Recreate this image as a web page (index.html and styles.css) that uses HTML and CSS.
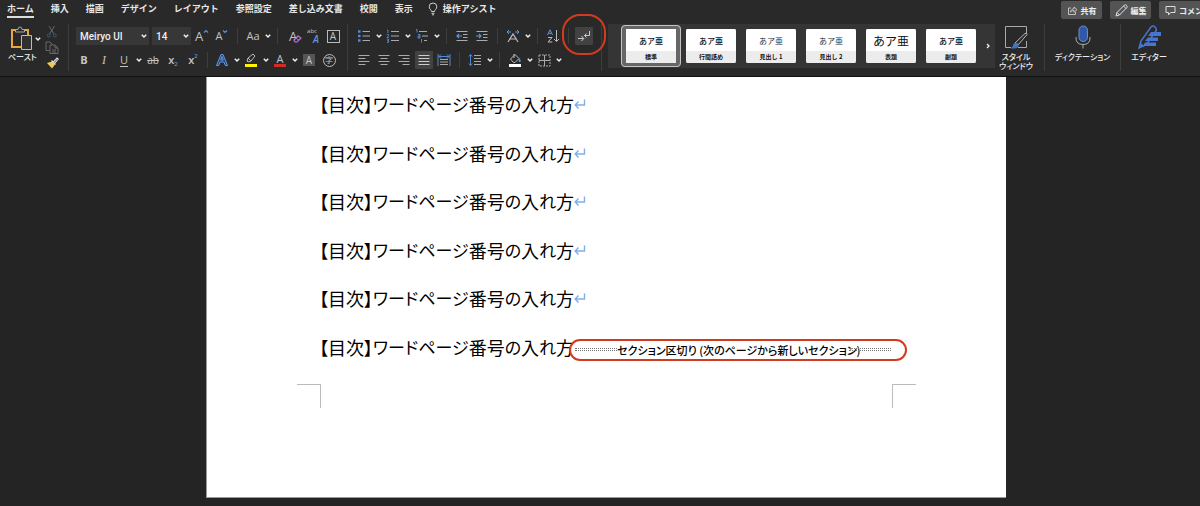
FILE: index.html
```html
<!DOCTYPE html>
<html lang="ja">
<head>
<meta charset="utf-8">
<title>文書</title>
<link rel="stylesheet" href="styles.css">
</head>
<body>
<svg class="defs" aria-hidden="true">
  <symbol id="caret" viewBox="0 0 8 8"><path d="M1.800 2.800L4 5l2.200-2.200" fill="none" stroke="#f0f0f0" stroke-width="1.500"/></symbol>
  <symbol id="return" viewBox="0 0 12 12"><path d="M10.500 1.500v5.500H1.500M4.500 3.500L1.200 7l3.300 3.500" fill="none" stroke="#80aee8" stroke-width="1.400"/></symbol>
</svg>
<header class="tabs">
  <nav class="tab-list">
    <a href="#" class="tab active">ホーム</a>
    <a href="#" class="tab">挿入</a>
    <a href="#" class="tab">描画</a>
    <a href="#" class="tab">デザイン</a>
    <a href="#" class="tab">レイアウト</a>
    <a href="#" class="tab">参照設定</a>
    <a href="#" class="tab">差し込み文書</a>
    <a href="#" class="tab">校閲</a>
    <a href="#" class="tab">表示</a>
    <a href="#" class="tab assist"><svg width="10" height="14" viewBox="0 0 10 14"><path d="M3.500 9.500C3.500 8 1.200 7 1.200 4.800a3.800 3.800 0 0 1 7.600 0C8.800 7 6.500 8 6.500 9.500zM3.500 11.300h3M4 12.800h2" fill="none" stroke="#d0d0d0"/></svg>操作アシスト</a>
  </nav>
  <div class="actions">
    <button class="pill"><svg width="11" height="11" viewBox="0 0 11 11"><path d="M4 3H1.500v6.500h7V7M3.500 7C4 4.500 5.500 3.800 7 3.800V2l3 2.700-3 2.600V5.500C5.500 5.500 4.500 6 3.500 7z" fill="none" stroke="#ddd" stroke-width=".8"/></svg>共有</button>
    <button class="pill"><svg width="13" height="13" viewBox="0 0 13 13"><path d="M1 12l1-3.500L9.500 1q1-.6 2 .4t.5 2L4.500 11zM2 8.500L4.500 11M8.500 2L11 4.500" fill="none" stroke="#e4e4e4"/></svg>編集</button>
    <button class="pill clipped"><svg width="11" height="11" viewBox="0 0 11 11"><path d="M1 1.500h9v6H5.500L3.500 10V7.500H1z" fill="none" stroke="#ddd"/></svg>コメント</button>
  </div>
</header>

<div class="ribbon" role="toolbar" aria-label="ホーム">
  <div class="clipboard">
    <div class="paste">
      <div class="paste-row">
        <button class="paste-button" aria-label="ペースト"><svg width="22" height="25" viewBox="0 0 22 25"><path d="M6 4H2v17h10M14 4h4v6" fill="none" stroke="#e7a73a" stroke-width="2"/><path d="M5.500 6V3.500H8Q8 1 10 1t2 2.500h2.500V6z" fill="#292929" stroke="#aaa"/><path d="M11.500 9.500h10v14h-10z" fill="#303030" stroke="#bcbcbc"/></svg></button>
        <button class="caret" aria-label="貼り付けのオプション"><svg><use href="#caret"/></svg></button>
      </div>
      <span class="caption">ペースト</span>
    </div>
    <div class="clip-tools">
      <button class="mini" aria-label="切り取り"><svg width="12" height="13" viewBox="0 0 12 13"><path d="M3 1l5 8M8.500 1l-5 8" fill="none" stroke="#777" stroke-width=".8"/><g fill="none" stroke="#3d5878"><circle cx="2.800" cy="10.500" r="1.500"/><circle cx="8.800" cy="10.500" r="1.500"/></g></svg></button>
      <button class="mini" aria-label="コピー"><svg width="14" height="13" viewBox="0 0 14 13"><path d="M4.500 9.500H1V1h4l2 2v1M5 4h5l3 3v5.500H5zM10 4v3h3M7 9h4M7 11h4" fill="none" stroke="#686868"/></svg></button>
      <button class="mini" aria-label="書式のコピー"><svg width="13" height="12" viewBox="0 0 13 12"><path d="M1 6l5-1.500 3 3L6 11.500z" fill="#efca59"/><path d="M5.500 3.500l4 4M7.500 5L11 1l1.200 1L9 6" fill="none" stroke="#ddd" stroke-width="1.200"/></svg></button>
    </div>
  </div>

  <div class="group font-group">
    <div class="row selects">
      <label class="select font-name"><select aria-label="フォント"><option>Meiryo UI</option></select><svg><use href="#caret"/></svg></label>
      <label class="select font-size"><select aria-label="フォント サイズ"><option>14</option></select><svg><use href="#caret"/></svg></label>
      <button class="tool" aria-label="拡大"><span class="glyph big">A</span><svg class="mark" viewBox="0 0 6 5"><path d="M1 3.500l2-2 2 2" fill="none" stroke="#5b91d3" stroke-width="1.200"/></svg></button>
      <button class="tool" aria-label="縮小"><span class="glyph">A</span><svg class="mark" viewBox="0 0 6 5"><path d="M1 1.500l2 2 2-2" fill="none" stroke="#5b91d3" stroke-width="1.200"/></svg></button>
      <span class="sep"></span>
      <button class="tool" aria-label="文字種の変換"><span class="glyph">Aa</span></button>
      <button class="caret" aria-label="文字種の一覧"><svg><use href="#caret"/></svg></button>
      <span class="sep"></span>
      <button class="tool" aria-label="書式のクリア"><span class="glyph big">A</span><svg class="eraser" width="9" height="8" viewBox="0 0 9 8"><path d="M1 5l4-4 3 2-4 4H2z" fill="#292929" stroke="#b878d0" stroke-width="1.200"/><path d="M3 3l3 2.500" stroke="#b878d0"/></svg></button>
      <button class="tool ruby" aria-label="ルビ"><span class="abc">abc</span><span class="blue-a">A</span></button>
      <button class="tool" aria-label="囲み線"><span class="boxed">A</span></button>
    </div>
    <div class="row">
      <button class="tool bold">B</button>
      <button class="tool italic">I</button>
      <button class="tool underline">U</button>
      <button class="caret" aria-label="下線の種類"><svg><use href="#caret"/></svg></button>
      <button class="tool strike">ab</button>
      <button class="tool script">x<sub>2</sub></button>
      <button class="tool script">x<sup>2</sup></button>
      <span class="sep thin"></span>
      <button class="tool" aria-label="文字の効果"><svg width="14" height="14" viewBox="0 0 14 14"><path d="M1.500 12.500L6 1.500h2l4.500 11h-2.200L9 9H5l-1.300 3.500zM5.700 7h2.600L7 3.500z" fill="#203d70" stroke="#659ce8"/></svg></button>
      <button class="caret" aria-label="文字の効果の一覧"><svg><use href="#caret"/></svg></button>
      <button class="tool" aria-label="蛍光ペン"><svg width="14" height="14" viewBox="0 0 14 14"><path d="M3 8l1-3 5-4 2 2-4 5-3 1zM4 5l3 3" fill="none" stroke="#bbb"/><path d="M1 11h12v3H1z" fill="#fff100"/></svg></button>
      <button class="caret" aria-label="蛍光ペンの色"><svg><use href="#caret"/></svg></button>
      <button class="tool font-color" aria-label="フォントの色"><span>A</span></button>
      <button class="caret" aria-label="色の一覧"><svg><use href="#caret"/></svg></button>
      <button class="tool" aria-label="文字の網かけ"><span class="shaded">A</span></button>
      <button class="tool" aria-label="囲い文字"><span class="circled">字</span></button>
    </div>
  </div>

  <div class="group">
    <div class="row">
      <button class="tool" aria-label="箇条書き"><svg width="14" height="14" viewBox="0 0 14 14"><path d="M1 2.500h2.500M1 7h2.500M1 11.500h2.500" stroke="#5389cf" stroke-width="2.500"/><path d="M5.500 2.500H13M5.500 7H13M5.500 11.500H13" stroke="#aaa"/></svg></button>
      <button class="caret" aria-label="行頭文字"><svg><use href="#caret"/></svg></button>
      <button class="tool" aria-label="段落番号"><svg width="14" height="14" viewBox="0 0 14 14"><path d="M1 1.200h1V4M.8 5.500h1.700v1.200L1 8.500h1.700M.8 10h1.700v3.500H.8M1 11.700h1.500" fill="none" stroke="#5389cf" stroke-width=".9"/><path d="M5 2.500h8M5 7h8M5 11.500h8" stroke="#aaa"/></svg></button>
      <button class="caret" aria-label="番号の種類"><svg><use href="#caret"/></svg></button>
      <button class="tool" aria-label="アウトライン"><svg width="14" height="14" viewBox="0 0 14 14"><path d="M1 .500h1v3M3 5.500h2V9H3V7.200h2M6.500 10v3.500" fill="none" stroke="#5389cf"/><path d="M4 2.500h8M7 7h6M9 11.500h3" stroke="#aaa"/></svg></button>
      <button class="caret" aria-label="アウトラインの種類"><svg><use href="#caret"/></svg></button>
      <span class="sep"></span>
      <button class="tool" aria-label="インデントを減らす"><svg width="12" height="12" viewBox="0 0 12 12"><path d="M.5 1.500h11M7 4.500h4.500M7 7.500h4.500M.5 10.500h11" stroke="#aaa"/><path d="M6 6H1M3 4L1 6l2 2" fill="none" stroke="#5b94df" stroke-width="1.200"/></svg></button>
      <button class="tool" aria-label="インデントを増やす"><svg width="12" height="12" viewBox="0 0 12 12"><path d="M.5 1.500h11M7 4.500h4.500M7 7.500h4.500M.5 10.500h11" stroke="#aaa"/><path d="M0 6h5M3 4l2 2-2 2" fill="none" stroke="#5b94df" stroke-width="1.200"/></svg></button>
      <span class="sep"></span>
      <button class="tool" aria-label="拡張書式"><svg width="14" height="14" viewBox="0 0 14 14"><path d="M2 13l5-8 5 8M4 10h6" fill="none" stroke="#bbb" stroke-width="1.200"/><path d="M1 3h4M3 1L1 3l2 2M9 3h4M11 1l2 2-2 2" fill="none" stroke="#5b94df"/></svg></button>
      <button class="caret" aria-label="拡張書式の一覧"><svg><use href="#caret"/></svg></button>
      <span class="sep"></span>
      <button class="tool" aria-label="並べ替え"><svg width="14" height="14" viewBox="0 0 14 14"><path d="M1.500 6L4 .800 6.500 6M2.500 4.300h3" fill="none" stroke="#5b94df"/><path d="M2 8.500h4L2 13h4.300M10.500 1v11.500M8 10l2.500 2.500L13 10" fill="none" stroke="#bbb"/></svg></button>
      <span class="sep"></span>
      <span class="marks-holder">
        <button class="tool pressed" aria-label="編集記号の表示"><svg width="14" height="14" viewBox="0 0 14 14"><path d="M1 9.500h5.500M4.500 7l2.300 2.500L4.500 12M12.500 2v4.500H7.500M9.500 4.500l-2 2 2 2" fill="none" stroke="#ccc"/></svg></button>
        <span class="ring"></span>
      </span>
    </div>
    <div class="row">
      <button class="tool" aria-label="左揃え"><svg width="12" height="12" viewBox="0 0 12 12"><path d="M.5 1.500h11M.5 4.500h7M.5 7.500h11M.5 10.500h7" stroke="#aaa"/></svg></button>
      <button class="tool" aria-label="中央揃え"><svg width="12" height="12" viewBox="0 0 12 12"><path d="M.5 1.500h11M2.500 4.500h7M.5 7.500h11M2.500 10.500h7" stroke="#aaa"/></svg></button>
      <button class="tool" aria-label="右揃え"><svg width="12" height="12" viewBox="0 0 12 12"><path d="M.5 1.500h11M4.500 4.500h7M.5 7.500h11M4.500 10.500h7" stroke="#aaa"/></svg></button>
      <button class="tool pressed" aria-label="両端揃え"><svg width="12" height="12" viewBox="0 0 12 12"><path d="M.5 1.500h11M.5 4.500h11M.5 7.500h11M.5 10.500h11" stroke="#ccc"/></svg></button>
      <button class="tool" aria-label="均等割り付け"><svg width="14" height="14" viewBox="0 0 14 14"><path d="M1 1v12M13 1v12M2 3.500h10M4 1.500l-2 2 2 2M10 1.500l2 2-2 2" fill="none" stroke="#5389cf"/><path d="M3 6.500h8M3 9h8M3 11.500h8" stroke="#aaa"/></svg></button>
      <span class="sep"></span>
      <button class="tool" aria-label="行間"><svg width="14" height="14" viewBox="0 0 14 14"><path d="M2.500 1.500v11M.8 3.500l1.700-2 1.700 2M.8 10.500l1.700 2 1.700-2" fill="none" stroke="#5389cf"/><path d="M6 2.500h7M6 5.500h7M6 8.500h7M6 11.500h7" stroke="#aaa"/></svg></button>
      <button class="caret" aria-label="行間の一覧"><svg><use href="#caret"/></svg></button>
      <span class="sep"></span>
      <button class="tool" aria-label="塗りつぶし"><svg width="14" height="14" viewBox="0 0 14 14"><path d="M2.500 6L7 1.500l4 4L7 9.500H5.500zM6 1v4" fill="none" stroke="#bbb"/><path d="M11 5q3 3 1 4t-1-4" fill="#5b94df"/><path d="M1 11h12v3H1z" fill="#fff"/></svg></button>
      <button class="caret" aria-label="塗りつぶしの色"><svg><use href="#caret"/></svg></button>
      <button class="tool" aria-label="罫線"><svg width="13" height="13" viewBox="0 0 13 13"><path d="M1 1h11v11H1z" fill="none" stroke="#aaa" stroke-dasharray="2 1"/><path d="M6.500 1v11M1 6.500h11" stroke="#aaa"/></svg></button>
      <button class="caret" aria-label="罫線の一覧"><svg><use href="#caret"/></svg></button>
    </div>
  </div>

  <div class="gallery">
    <button class="style selected"><span class="sample">あア亜</span><span class="name">標準</span></button>
    <button class="style"><span class="sample">あア亜</span><span class="name">行間詰め</span></button>
    <button class="style"><span class="sample light">あア亜</span><span class="name">見出し 1</span></button>
    <button class="style"><span class="sample light">あア亜</span><span class="name">見出し 2</span></button>
    <button class="style"><span class="sample large">あア亜</span><span class="name">表題</span></button>
    <button class="style"><span class="sample">あア亜</span><span class="name">副題</span></button>
    <button class="more" aria-label="次のスタイル"><svg width="6" height="8" viewBox="0 0 6 8"><path d="M2 2l2 2-2 2" fill="none" stroke="#eee" stroke-width="1.300"/></svg></button>
  </div>

  <div class="panes">
    <button class="pane styles-pane"><svg width="25" height="25" viewBox="0 0 25 25"><path d="M7 22.500H1.500v-21h21V9M22.500 16v6.500H14" fill="none" stroke="#aaa"/><path d="M11 18L21 8.500q2-1 2 1L14 20z" fill="#292929" stroke="#bbb"/><path d="M6 23q3-.5 3-3 1-3 4-2t1 4q-2 2.500-8 1z" fill="#4571c4"/></svg><span>スタイル<br>ウィンドウ</span></button>
    <button class="pane dictation"><svg width="16" height="25" viewBox="0 0 16 25"><rect x="4" y="1" width="8.500" height="15.500" rx="4.200" fill="#3157a8" stroke="#6790d4"/><path d="M1 12v1q0 6.500 7 6.500t7-6.500v-1M8 19.500v4" fill="none" stroke="#aaa"/></svg><span>ディクテーション</span></button>
    <button class="pane editor"><svg width="25" height="25" viewBox="0 0 25 25"><path d="M2 23l2-7L14 2q2-2 4 0t1 4L9 20z" fill="none" stroke="#4a74cc" stroke-width="1.500"/><path d="M14 7h10v4H11zM11 12.500h10v3.500H8zM8 17.500h11V21H6z" fill="#4775d1"/><path d="M2 23l2-5 3 3z" fill="#4a74cc"/></svg><span>エディター</span></button>
  </div>
</div>

<main class="canvas">
  <article class="page">
    <ul class="lines">
      <li>【目次】<span class="kana">ワードページ</span>番号<span class="kana">の</span>入<span class="kana">れ</span>方<svg class="ret"><use href="#return"/></svg></li>
      <li>【目次】<span class="kana">ワードページ</span>番号<span class="kana">の</span>入<span class="kana">れ</span>方<svg class="ret"><use href="#return"/></svg></li>
      <li>【目次】<span class="kana">ワードページ</span>番号<span class="kana">の</span>入<span class="kana">れ</span>方<svg class="ret"><use href="#return"/></svg></li>
      <li>【目次】<span class="kana">ワードページ</span>番号<span class="kana">の</span>入<span class="kana">れ</span>方<svg class="ret"><use href="#return"/></svg></li>
      <li>【目次】<span class="kana">ワードページ</span>番号<span class="kana">の</span>入<span class="kana">れ</span>方<svg class="ret"><use href="#return"/></svg></li>
      <li>【目次】<span class="kana">ワードページ</span>番号<span class="kana">の</span>入<span class="kana">れ</span>方<span class="break"><i class="dots"></i><span>セクション区切り (次のページから新しいセクション)</span><i class="dots tail"></i></span></li>
    </ul>
    <div class="corners"><i class="corner left"></i><i class="corner right"></i></div>
  </article>
</main>
</body>
</html>
```
FILE: styles.css
```css
* { box-sizing: border-box; }
body {
  margin: 0;
  min-height: 100vh;
  background: #242424;
  color: #eee;
  font-family: "Noto Sans CJK JP", sans-serif;
  overflow-x: hidden;
}
.defs { position: absolute; width: 0; height: 0; }
button {
  border: 0;
  padding: 0;
  margin: 0;
  background: none;
  color: inherit;
  font: inherit;
}
svg { display: block; flex: none; }

/* tab strip */
.tabs {
  display: flex;
  justify-content: space-between;
  height: 19px;
  background: #292929;
}
.tab-list { display: flex; gap: 17px; padding-left: 7px; }
.tab {
  color: #e8e8e8;
  font-size: 9px;
  font-weight: 700;
  line-height: 17px;
  text-decoration: none;
  white-space: nowrap;
}
.active { height: 18px; border-bottom: 2px solid #ddd; }
.assist { display: flex; align-items: center; gap: 5px; margin-left: -2px; height: 17px; }
.actions { display: flex; gap: 8px; }
.pill {
  display: flex;
  align-items: center;
  justify-content: center;
  gap: 3px;
  width: 41px;
  height: 18px;
  margin-top: 1px;
  border-radius: 2px;
  background: #545454;
  font-size: 8px;
  font-weight: 700;
  white-space: nowrap;
}
.clipped { justify-content: flex-start; padding-left: 6px; overflow: hidden; border-radius: 2px 0 0 2px; }

/* ribbon */
.ribbon {
  display: flex;
  height: 58px;
  background: #292929;
  border-bottom: 1px solid #111;
}
.clipboard {
  display: flex;
  width: 69px;
  flex: none;
  margin: 5px 0;
  padding-left: 8px;
  border-right: 1px solid #3d3d3d;
}
.paste { width: 34px; }
.paste-row { display: flex; align-items: center; gap: 2px; padding: 2px 0 0 2px; }
.caption { display: block; font-size: 8px; font-weight: 500; line-height: 12px; white-space: nowrap; font-feature-settings: "palt"; }
.clip-tools { display: flex; flex-direction: column; gap: 2px; padding-left: 2px; }
.mini { display: grid; place-items: center; width: 16px; height: 14px; }

.group {
  display: flex;
  flex-direction: column;
  flex: none;
  gap: 6px;
  margin: 5px 0;
  padding: 3px 7px 0 6px;
  border-right: 1px solid #3d3d3d;
}
.font-group { padding-right: 4px; padding-left: 5px; }
.row { display: flex; align-items: center; height: 18px; }
.selects { padding-left: 2px; }
.tool {
  position: relative;
  display: flex;
  align-items: center;
  justify-content: center;
  width: 20px;
  height: 18px;
  color: #c4c4c4;
  font-family: "Open Sans", "Noto Sans CJK JP", sans-serif;
  font-size: 11px;
  line-height: 18px;
}
.caret { display: grid; place-items: center; width: 9px; height: 18px; }
.caret svg, .select svg { width: 8px; height: 8px; }
.sep { width: 1px; height: 16px; margin: 0 5px; background: #3d3d3d; }
.thin { margin: 0 4px; }
.select { position: relative; display: flex; height: 18px; }
.select svg { position: absolute; right: 1px; top: 5px; pointer-events: none; }
.select select {
  appearance: none;
  width: 100%;
  height: 18px;
  margin: 0;
  border: 0;
  padding: 0 4px;
  background: #373737;
  color: #eee;
  font-family: Roboto, sans-serif;
  font-size: 10px;
  font-weight: 500;
}
.font-name { width: 73px; margin-right: 3px; }
.font-size { width: 39px; margin-right: 1px; }
.big { font-size: 13px; }
.mark { width: 6px; height: 5px; align-self: flex-start; margin-top: 2px; }
.eraser { position: absolute; right: 1px; bottom: 2px; }
.abc { align-self: flex-start; font-size: 6px; line-height: 9px; }
.blue-a { color: #5b94df; font-size: 10px; font-style: italic; font-weight: 600; line-height: 12px; align-self: flex-end; margin-left: -4px; }
.boxed { width: 13px; height: 13px; border: 1px solid #bbb; font-size: 10px; line-height: 11px; }
.bold { font-weight: 700; }
.italic { font-family: "Liberation Serif", serif; font-style: italic; font-size: 12px; }
.underline { text-decoration: underline; text-underline-offset: 2px; }
.strike { font-size: 10px; text-decoration: line-through; }
.script { font-weight: 600; }
.script sub, .script sup { color: #5b94df; font-size: 6px; line-height: 6px; }
.script sub { align-self: flex-end; margin-bottom: 2px; }
.script sup { align-self: flex-start; margin-top: 2px; }
.font-color span { width: 12px; height: 14px; border-bottom: 3px solid #d22c22; line-height: 11px; }
.shaded { width: 12px; height: 12px; background: #555; font-size: 10px; line-height: 12px; }
.circled { width: 13px; height: 13px; border: 1px solid #bbb; border-radius: 50%; font-size: 8px; line-height: 10px; }
.pressed { width: 18px; margin: 0 1px; border-radius: 1px; background: #424242; }
.marks-holder { position: relative; }
.ring {
  position: absolute;
  left: -12px;
  top: -13px;
  width: 44px;
  height: 41px;
  border: 2px solid #d33b21;
  border-radius: 18px;
  pointer-events: none;
}

/* style gallery */
.gallery {
  display: flex;
  align-items: center;
  flex: 1;
  min-width: 0;
  height: 44px;
  margin: 5px 0 0 6px;
  padding-left: 13px;
  background: #353535;
  overflow: hidden;
}
.style {
  display: flex;
  flex-direction: column;
  flex: none;
  width: 60px;
  height: 42px;
  border: 4px solid transparent;
  border-radius: 6px;
  border-width: 4px 5px;
  background: linear-gradient(#fff 66%, #ececec 66%) padding-box;
  color: #111;
  text-align: center;
}
.selected { outline: 1px solid #c4c4c4; outline-offset: -1px; border-color: #666; border-radius: 4px; }
.sample { height: 22px; font-size: 8px; font-weight: 500; line-height: 23px; }
.light { color: #333; font-weight: 400; }
.large { font-size: 12px; font-weight: 400; }
.name { font-size: 6px; font-weight: 700; line-height: 11px; }
.more { margin: 0 4px 0 auto; }

.panes { display: flex; flex: none; width: 205px; padding: 5px 0; }
.pane {
  display: flex;
  flex-direction: column;
  align-items: center;
  gap: 2px;
  padding-top: 1px;
  border-right: 1px solid #3d3d3d;
  font-size: 8px;
  font-weight: 500;
  line-height: 9px;
  white-space: nowrap;
  font-feature-settings: "palt";
}
.styles-pane { width: 50px; padding-right: 7px; }
.dictation { width: 76px; }
.editor { width: 56px; border: 0; }

/* document */
.canvas { padding: 0 0 8px 12px; }
.page {
  max-width: 800px;
  margin: 0 auto;
  padding: 3px 90px 89px;
  border: 1px solid #999;
  border-width: 0 0 1px 1px;
  background: #fff;
  color: #000;
}
.lines { margin: 0; padding: 0 0 0 22px; list-style: none; }
.lines li {
  display: flex;
  align-items: center;
  height: 48px;
  font-size: 18px;
  line-height: 48px;
  white-space: nowrap;
  font-feature-settings: "palt";
}
.lines li:nth-child(even) { height: 49px; }
.kana { font-size: 17px; }
.ret { width: 12px; height: 12px; }
.break {
  display: flex;
  align-items: center;
  flex: none;
  width: 338px;
  height: 22px;
  margin-top: 6px;
  margin-left: -5px;
  margin-right: -40px;
  padding-left: 4px;
  border: 2px solid #d33b21;
  border-radius: 11px;
  font-size: 11px;
  font-weight: 500;
  line-height: 18px;
}
.dots { flex: none; width: 42px; height: 3px; border: 1px dotted #777; border-width: 1px 0; }
.tail { margin-left: -12px; }
.corners { display: flex; justify-content: space-between; padding-top: 13px; }
.corner { width: 24px; height: 24px; border-top: 1px solid #bbb; }
.left { border-right: 1px solid #bbb; }
.right { border-left: 1px solid #bbb; }
```
